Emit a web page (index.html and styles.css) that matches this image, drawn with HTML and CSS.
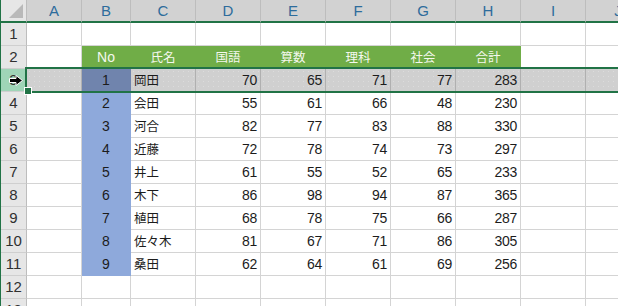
FILE: index.html
```html
<!DOCTYPE html>
<html>
  <head>
    <meta charset="utf-8">
    <title>Sheet</title>
    <link rel="stylesheet" href="styles.css">
  </head>
  <body>
    <div class="sheet">
      <!-- column headers -->
      <div class="corner"><span class="tri"></span></div>
      <div class="ch">A</div><div class="ch">B</div><div class="ch">C</div><div class="ch">D</div><div class="ch">E</div>
      <div class="ch">F</div><div class="ch">G</div><div class="ch">H</div><div class="ch">I</div><div class="ch">J</div>

      <!-- row 1 -->
      <div class="rh">1</div>
      <div class="c"></div><div class="c"></div><div class="c"></div><div class="c"></div><div class="c"></div>
      <div class="c"></div><div class="c"></div><div class="c"></div><div class="c"></div><div class="c"></div>

      <!-- row 2 -->
      <div class="rh">2</div>
      <div class="c"></div>
      <div class="c g ctr">No</div>
      <div class="c g ctr"><span class="jp">氏名</span></div>
      <div class="c g ctr"><span class="jp">国語</span></div>
      <div class="c g ctr"><span class="jp">算数</span></div>
      <div class="c g ctr"><span class="jp">理科</span></div>
      <div class="c g ctr"><span class="jp">社会</span></div>
      <div class="c g ctr"><span class="jp">合計</span></div>
      <div class="c"></div><div class="c"></div>

      <!-- row 3 (selected) -->
      <div class="rh rh-sel">3</div>
      <div class="c sel"></div>
      <div class="c sel-b ctr">1</div>
      <div class="c sel"><span class="jp">岡田</span></div>
      <div class="c sel num">70</div>
      <div class="c sel num">65</div>
      <div class="c sel num">71</div>
      <div class="c sel num">77</div>
      <div class="c sel num">283</div>
      <div class="c sel"></div><div class="c sel"></div>

      <div class="rh">4</div>
      <div class="c"></div><div class="c b ctr">2</div><div class="c"><span class="jp">会田</span></div>
      <div class="c num">55</div><div class="c num">61</div><div class="c num">66</div><div class="c num">48</div><div class="c num">230</div>
      <div class="c"></div><div class="c"></div>

      <div class="rh">5</div>
      <div class="c"></div><div class="c b ctr">3</div><div class="c"><span class="jp">河合</span></div>
      <div class="c num">82</div><div class="c num">77</div><div class="c num">83</div><div class="c num">88</div><div class="c num">330</div>
      <div class="c"></div><div class="c"></div>

      <div class="rh">6</div>
      <div class="c"></div><div class="c b ctr">4</div><div class="c"><span class="jp">近藤</span></div>
      <div class="c num">72</div><div class="c num">78</div><div class="c num">74</div><div class="c num">73</div><div class="c num">297</div>
      <div class="c"></div><div class="c"></div>

      <div class="rh">7</div>
      <div class="c"></div><div class="c b ctr">5</div><div class="c"><span class="jp">井上</span></div>
      <div class="c num">61</div><div class="c num">55</div><div class="c num">52</div><div class="c num">65</div><div class="c num">233</div>
      <div class="c"></div><div class="c"></div>

      <div class="rh">8</div>
      <div class="c"></div><div class="c b ctr">6</div><div class="c"><span class="jp">木下</span></div>
      <div class="c num">86</div><div class="c num">98</div><div class="c num">94</div><div class="c num">87</div><div class="c num">365</div>
      <div class="c"></div><div class="c"></div>

      <div class="rh">9</div>
      <div class="c"></div><div class="c b ctr">7</div><div class="c"><span class="jp">植田</span></div>
      <div class="c num">68</div><div class="c num">78</div><div class="c num">75</div><div class="c num">66</div><div class="c num">287</div>
      <div class="c"></div><div class="c"></div>

      <div class="rh">10</div>
      <div class="c"></div><div class="c b ctr">8</div><div class="c"><span class="jp">佐々木</span></div>
      <div class="c num">81</div><div class="c num">67</div><div class="c num">71</div><div class="c num">86</div><div class="c num">305</div>
      <div class="c"></div><div class="c"></div>

      <div class="rh">11</div>
      <div class="c"></div><div class="c b ctr">9</div><div class="c"><span class="jp">桑田</span></div>
      <div class="c num">62</div><div class="c num">64</div><div class="c num">61</div><div class="c num">69</div><div class="c num">256</div>
      <div class="c"></div><div class="c"></div>

      <div class="rh">12</div>
      <div class="c"></div><div class="c"></div><div class="c"></div><div class="c"></div><div class="c"></div>
      <div class="c"></div><div class="c"></div><div class="c"></div><div class="c"></div><div class="c"></div>

      <div class="rh">13</div>
      <div class="c"></div><div class="c"></div><div class="c"></div><div class="c"></div><div class="c"></div>
      <div class="c"></div><div class="c"></div><div class="c"></div><div class="c"></div><div class="c"></div>

      <!-- selection of row 3 -->
      <div class="selection"></div>
      <div class="handle"></div>
      <svg class="cursor" width="16" height="13" viewBox="0 0 16 13">
        <path d="M1.5 4.5 H8 V1.5 L14.5 6.5 L8 11.5 V8.5 H1.5 Z" fill="#000" stroke="#fff" stroke-width="1"/>
      </svg>
    </div>
  </body>
</html>
```

FILE: styles.css
```css
body {
  margin: 0;
  overflow: hidden;
  background: #fff;
  font-family: "Liberation Sans", "Noto Sans CJK JP", sans-serif;
  font-size: 14px;
  color: #1c1c1c;
}
.sheet {
  position: relative;
  display: grid;
  grid-template-columns: 26px 55px 49px 65px 65px 65px 65px 65px 65px 65px 65px;
  grid-template-rows: 23px repeat(13, 23px);
  width: 650px;
  border-left: 1px solid #217346;
}
.sheet > div {
  box-sizing: border-box;
  line-height: 22px;
  white-space: nowrap;
  overflow: hidden;
}
.corner {
  position: relative;
  background: #e6e6e6;
  border-right: 1px solid #bdbdbd;
  border-bottom: 2px solid #217346;
}
.tri {
  position: absolute;
  right: 3px;
  bottom: 3px;
  width: 0;
  height: 0;
  border-left: 14px solid transparent;
  border-bottom: 14px solid #b9b9b9;
}
.ch {
  background: #d2d2d2;
  border-right: 1px solid #bdbdbd;
  border-bottom: 2px solid #217346;
  text-align: center;
  color: #2d6c9c;
  font-size: 15px;
  line-height: 21px !important;
}
.rh {
  background: #e6e6e6;
  border-right: 1px solid #bdbdbd;
  border-bottom: 1px solid #cfcfcf;
  text-align: center;
  color: #303030;
  font-size: 15px;
}
.rh-sel {
  background: #9fd5b7;
}
.c {
  border-right: 1px solid #d4d4d4;
  border-bottom: 1px solid #d4d4d4;
  padding: 0 3px;
}
.num {
  text-align: right;
  letter-spacing: -0.3px;
}
.ctr {
  text-align: center;
}
.jp {
  font-size: 12.5px;
}
.g {
  background: #70ad47;
  border-color: #70ad47;
  color: #f4f8ee;
}
.b {
  background: #8ea9db;
  border-color: #8ea9db;
}
.sel {
  background-color: #d0d0d0;
  background-image: radial-gradient(#dcdcdc 0.7px, transparent 1px);
  background-size: 5px 5px;
  border-right-color: #b0b0b0;
  border-bottom-color: #b0b0b0;
}
.sel-b {
  background: #7084ad;
  border-right: 1px solid #7084ad;
  border-bottom: 1px solid #7084ad;
}
.selection {
  position: absolute;
  left: 24px;
  top: 67px;
  width: 640px;
  height: 26px;
  border: 2px solid #217346;
  border-right: none;
}
.handle {
  position: absolute;
  left: 24px;
  top: 88px;
  width: 6px;
  height: 6px;
  background: #217346;
  outline: 1px solid #fff;
}
.cursor {
  position: absolute;
  left: 7px;
  top: 74px;
}
```
